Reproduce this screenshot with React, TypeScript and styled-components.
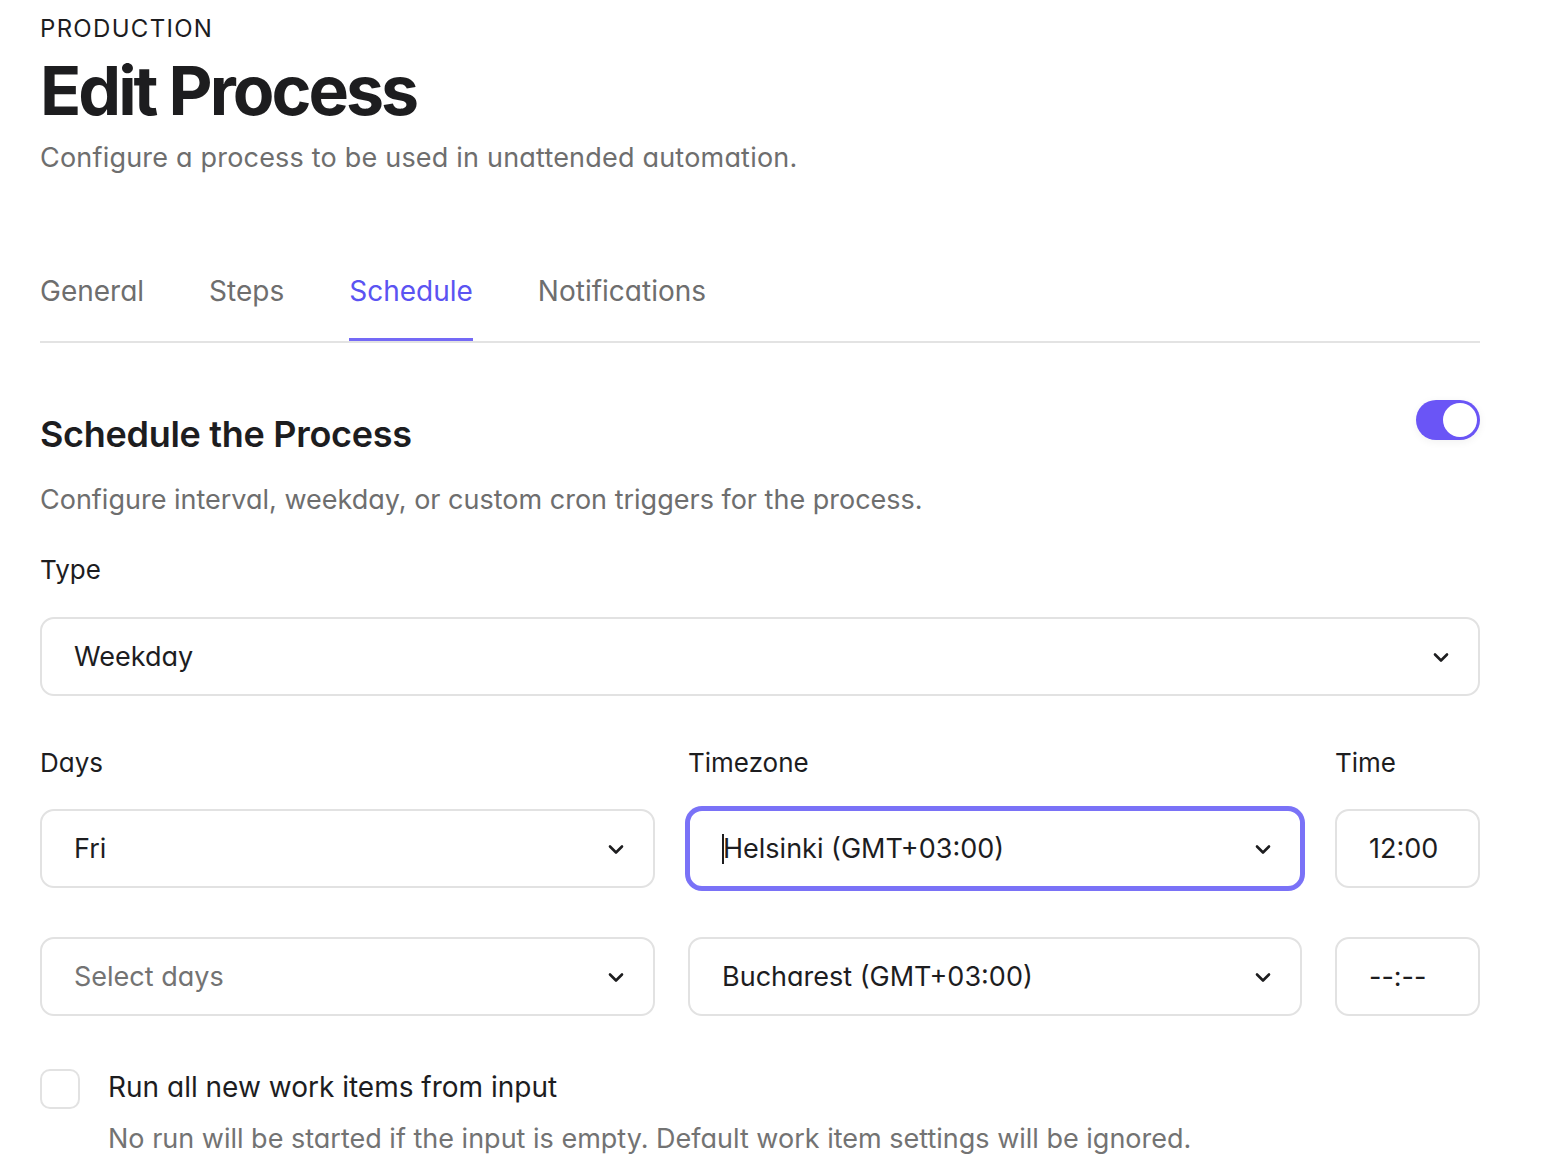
import React from "react";
import styled, { createGlobalStyle } from "styled-components";

const Global = createGlobalStyle`
  html, body { margin: 0; padding: 0; background: #ffffff; }
  body {
    font-family: Inter, "Noto Sans", "Liberation Sans", sans-serif;
    font-feature-settings: "cv11" 1;
    color: #1d1d1f;
    -webkit-font-smoothing: antialiased;
  }
  * { box-sizing: border-box; }
`;

const Page = styled.main`
  width: 1440px;
  margin-left: 40px;
  padding-top: 15px;
  padding-bottom: 16px;
`;

const Eyebrow = styled.div`
  font-size: 24px;
  line-height: 28px;
  letter-spacing: 1.3px;
  color: #1d1d1f;
`;

const Title = styled.h1`
  margin: 7px 0 0;
  font-size: 68px;
  line-height: 80px;
  font-weight: 700;
  letter-spacing: -3px;
  color: #1d1d1f;
`;

const Subtitle = styled.p`
  margin: 11px 0 0;
  font-size: 27px;
  line-height: 34px;
  letter-spacing: 0.2px;
  color: #6e6e6e;
`;

const Tabs = styled.nav`
  margin-top: 99px;
  display: flex;
  gap: 65px;
  border-bottom: 2px solid #e3e3e3;
`;

const Tab = styled.button<{ $active?: boolean }>`
  appearance: none;
  background: none;
  border: 0;
  padding: 0 0 30px;
  margin: 0;
  font: inherit;
  font-size: 28px;
  line-height: 34px;
  color: ${(p) => (p.$active ? "#5b53f2" : "#6e6e6e")};
  border-bottom: 3px solid ${(p) => (p.$active ? "#7469f6" : "transparent")};
  cursor: pointer;
`;

const SectionHeader = styled.div`
  margin-top: 57px;
  display: flex;
  justify-content: space-between;
  align-items: flex-start;
`;

const SectionTitle = styled.h2`
  margin: 12px 0 0;
  font-size: 36px;
  line-height: 44px;
  font-weight: 600;
  letter-spacing: -0.3px;
  color: #1d1d1f;
`;

const Toggle = styled.button<{ $on?: boolean }>`
  appearance: none;
  border: 0;
  padding: 3px;
  width: 64px;
  height: 40px;
  border-radius: 20px;
  background: ${(p) => (p.$on ? "#6a55f6" : "#dcdcdc")};
  display: flex;
  justify-content: ${(p) => (p.$on ? "flex-end" : "flex-start")};
  box-shadow: 0 2px 8px rgba(0, 0, 0, 0.06);
  cursor: pointer;
`;

const Knob = styled.span`
  width: 34px;
  height: 34px;
  border-radius: 50%;
  background: #ffffff;
`;

const Description = styled.p`
  margin: 27px 0 0;
  font-size: 27px;
  line-height: 34px;
  color: #6e6e6e;
`;

const Label = styled.div<{ $top?: number }>`
  margin-top: ${(p) => p.$top ?? 0}px;
  font-size: 26px;
  line-height: 34px;
  color: #1d1d1f;
`;

const Field = styled.div<{ $focused?: boolean; $top?: number }>`
  margin-top: ${(p) => p.$top ?? 0}px;
  height: 79px;
  border: 2px solid ${(p) => (p.$focused ? "#7a72f7" : "#e2e2e2")};
  box-shadow: ${(p) => (p.$focused ? "0 0 0 3px #7a72f7" : "none")};
  border-radius: 14px;
  background: #fff;
  display: flex;
  align-items: center;
  justify-content: space-between;
  padding: 0 28px 0 32px;
`;

const FieldText = styled.span<{ $placeholder?: boolean }>`
  font-size: 27px;
  line-height: 34px;
  color: ${(p) => (p.$placeholder ? "#737373" : "#1d1d1f")};
  display: flex;
  align-items: center;
`;

const Caret = styled.span`
  display: inline-block;
  width: 2px;
  height: 30px;
  background: #1d1d1f;
  margin-right: -1px;
`;

const Grid = styled.div`
  display: grid;
  grid-template-columns: 615px 614px 145px;
  column-gap: 33px;
  margin-top: 50px;
`;

const CheckRow = styled.label`
  margin-top: 53px;
  display: grid;
  grid-template-columns: 40px 1fr;
  column-gap: 28px;
  align-items: start;
`;

const CheckBox = styled.span`
  width: 40px;
  height: 40px;
  border: 2px solid #e2e2e2;
  border-radius: 10px;
  background: #fff;
`;

const CheckLabel = styled.span`
  font-size: 28px;
  line-height: 34px;
  color: #1d1d1f;
  padding-top: 1px;
`;

const Help = styled.span`
  grid-column: 2;
  margin-top: 13px;
  font-size: 27px;
  line-height: 34px;
  color: #737373;
`;

const Chevron = () => (
  <svg width="18" height="12" viewBox="0 0 18 12" fill="none">
    <path d="M3 3.5L9 9.5L15 3.5" stroke="#1d1d1f" strokeWidth="2.6" strokeLinecap="round" strokeLinejoin="round" />
  </svg>
);

export default function App() {
  return (
    <>
      <Global />
      <Page>
        <Eyebrow>PRODUCTION</Eyebrow>
        <Title>Edit Process</Title>
        <Subtitle>Configure a process to be used in unattended automation.</Subtitle>

        <Tabs>
          <Tab>General</Tab>
          <Tab>Steps</Tab>
          <Tab $active>Schedule</Tab>
          <Tab>Notifications</Tab>
        </Tabs>

        <SectionHeader>
          <SectionTitle>Schedule the Process</SectionTitle>
          <Toggle $on aria-label="Enable schedule">
            <Knob />
          </Toggle>
        </SectionHeader>
        <Description>Configure interval, weekday, or custom cron triggers for the process.</Description>

        <Label $top={36}>Type</Label>
        <Field $top={30}>
          <FieldText>Weekday</FieldText>
          <Chevron />
        </Field>

        <Grid>
          <Label>Days</Label>
          <Label>Timezone</Label>
          <Label>Time</Label>

          <Field $top={29}>
            <FieldText>Fri</FieldText>
            <Chevron />
          </Field>
          <Field $top={29} $focused>
            <FieldText>
              <Caret />
              Helsinki (GMT+03:00)
            </FieldText>
            <Chevron />
          </Field>
          <Field $top={29}>
            <FieldText>12:00</FieldText>
          </Field>

          <Field $top={49}>
            <FieldText $placeholder>Select days</FieldText>
            <Chevron />
          </Field>
          <Field $top={49}>
            <FieldText>Bucharest (GMT+03:00)</FieldText>
            <Chevron />
          </Field>
          <Field $top={49}>
            <FieldText>--:--</FieldText>
          </Field>
        </Grid>

        <CheckRow>
          <CheckBox />
          <CheckLabel>Run all new work items from input</CheckLabel>
          <Help>No run will be started if the input is empty. Default work item settings will be ignored.</Help>
        </CheckRow>
      </Page>
    </>
  );
}
